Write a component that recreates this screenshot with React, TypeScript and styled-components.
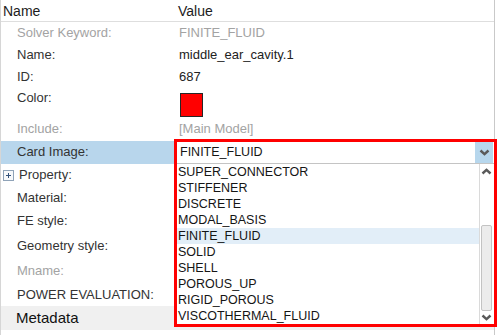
import React from "react";
import styled, { createGlobalStyle } from "styled-components";

const GlobalStyle = createGlobalStyle`
  html, body {
    margin: 0;
    padding: 0;
    background: #fff;
  }
  body {
    font-family: "Liberation Sans", Arial, sans-serif;
    color: #2b2b2b;
  }
`;

const Panel = styled.div`
  position: relative;
  width: 495px;
  height: 335px;
  box-sizing: border-box;
  border-left: 1px solid #d6d6d6;
  border-right: 1px solid #c9c9c9;
`;

const HeaderRow = styled.div`
  display: grid;
  grid-template-columns: 173px 1fr;
  height: 22px;
  box-sizing: border-box;
  border-bottom: 1px solid #dedede;
  font-size: 14px;
  line-height: 22px;
  color: #1c1c1c;
`;

const HeaderCell = styled.div<{ $pad: number }>`
  padding-left: ${(p) => p.$pad}px;
`;

const Row = styled.div<{ $h: number; $bg?: string }>`
  position: relative;
  display: grid;
  grid-template-columns: 173px 1fr;
  height: ${(p) => p.$h}px;
  box-sizing: border-box;
  padding-top: 3px;
  background: ${(p) => p.$bg || "transparent"};
  font-size: 13px;
  line-height: 16px;
`;

const Label = styled.div<{ $muted?: boolean; $tree?: boolean }>`
  display: flex;
  align-items: center;
  height: 16px;
  padding-left: ${(p) => (p.$tree ? 2 : 16)}px;
  color: ${(p) => (p.$muted ? "#a3a3a3" : "#333")};
`;

const Value = styled.div<{ $muted?: boolean }>`
  padding-left: 5px;
  color: ${(p) => (p.$muted ? "#a3a3a3" : "#222")};
`;

const Expander = styled.span`
  position: relative;
  width: 9px;
  height: 9px;
  margin-right: 5px;
  border: 1px solid #8fa3b8;
  background: #f7f9fb;

  &::before,
  &::after {
    content: "";
    position: absolute;
    background: #34527a;
  }
  &::before {
    left: 2px;
    top: 4px;
    width: 5px;
    height: 1px;
  }
  &::after {
    left: 4px;
    top: 2px;
    width: 1px;
    height: 5px;
  }
`;

const Swatch = styled.div`
  width: 23px;
  height: 24px;
  box-sizing: border-box;
  border: 1px solid #262626;
  background: #ff0000;
  margin-top: 3px;
  margin-left: 1px;
`;

const MetaRow = styled.div`
  height: 24px;
  padding-left: 15px;
  background: #f0f0f0;
  font-size: 15px;
  line-height: 24px;
  color: #111;
`;

const Combo = styled.div`
  position: absolute;
  left: 173px;
  top: -2px;
  width: 323px;
  height: 188px;
  box-sizing: border-box;
  border: 3px solid #ff0000;
  background: #fff;
  display: flex;
  flex-direction: column;
  font-size: 12.5px;
  color: #151515;
  z-index: 2;
`;

const ComboInput = styled.div`
  display: flex;
  height: 22px;
  box-sizing: border-box;
  border-bottom: 1px solid #c4c4c4;
`;

const ComboText = styled.div`
  flex: 1;
  padding-left: 3px;
  line-height: 21px;
`;

const DropButton = styled.div`
  width: 18px;
  margin-right: 1px;
  background: #b7d7ed;
  display: flex;
  align-items: center;
  justify-content: center;
`;

const ListArea = styled.div`
  flex: 1;
  display: flex;
  min-height: 0;
  overflow: hidden;
`;

const Items = styled.div`
  flex: 1;
`;

const Item = styled.div<{ $selected?: boolean }>`
  height: 16px;
  line-height: 16px;
  padding-left: 1px;
  background: ${(p) => (p.$selected ? "#e2eef8" : "transparent")};
`;

const Scrollbar = styled.div`
  width: 13px;
  margin-right: 1px;
  border-left: 1px solid #dadada;
  display: flex;
  flex-direction: column;
  align-items: center;
`;

const Arrow = styled.div`
  height: 14px;
  display: flex;
  align-items: center;
  justify-content: center;
`;

const Track = styled.div`
  flex: 1;
  width: 100%;
  display: flex;
  flex-direction: column;
  justify-content: flex-end;
`;

const Thumb = styled.div`
  height: 86px;
  box-sizing: border-box;
  border: 1px solid #c3c3c3;
  border-radius: 2px;
  background: #ececec;
  margin: 0 1px -1px;
`;

const Chevron = ({ up }: { up?: boolean }) => (
  <svg width="11" height="7" viewBox="0 0 11 7">
    <polyline
      points={up ? "1.5,5.5 5.5,1.8 9.5,5.5" : "1.5,1.5 5.5,5.2 9.5,1.5"}
      fill="none"
      stroke="#5a5a5a"
      strokeWidth="2.4"
    />
  </svg>
);

const options = [
  "SUPER_CONNECTOR",
  "STIFFENER",
  "DISCRETE",
  "MODAL_BASIS",
  "FINITE_FLUID",
  "SOLID",
  "SHELL",
  "POROUS_UP",
  "RIGID_POROUS",
  "VISCOTHERMAL_FLUID",
];

const rows = [
  { label: "Property:", h: 23, tree: true },
  { label: "Material:", h: 23 },
  { label: "FE style:", h: 25 },
  { label: "Geometry style:", h: 25 },
  { label: "Mname:", h: 24, muted: true },
  { label: "POWER EVALUATION:", h: 22 },
];

const App = () => {
  const selected = "FINITE_FLUID";

  return (
    <>
      <GlobalStyle />
      <Panel>
        <HeaderRow>
          <HeaderCell $pad={2}>Name</HeaderCell>
          <HeaderCell $pad={4}>Value</HeaderCell>
        </HeaderRow>
        <Row $h={22}>
          <Label $muted>Solver Keyword:</Label>
          <Value $muted>FINITE_FLUID</Value>
        </Row>
        <Row $h={22}>
          <Label>Name:</Label>
          <Value>middle_ear_cavity.1</Value>
        </Row>
        <Row $h={21}>
          <Label>ID:</Label>
          <Value>687</Value>
        </Row>
        <Row $h={31}>
          <Label>Color:</Label>
          <Value>
            <Swatch />
          </Value>
        </Row>
        <Row $h={23}>
          <Label $muted>Include:</Label>
          <Value $muted>[Main Model]</Value>
        </Row>
        <Row $h={23} $bg="#b8d6ec">
          <Label>Card Image:</Label>
          <Value />
          <Combo>
            <ComboInput>
              <ComboText>{selected}</ComboText>
              <DropButton>
                <Chevron />
              </DropButton>
            </ComboInput>
            <ListArea>
              <Items>
                {options.map((o) => (
                  <Item key={o} $selected={o === selected}>
                    {o}
                  </Item>
                ))}
              </Items>
              <Scrollbar>
                <Arrow>
                  <Chevron up />
                </Arrow>
                <Track>
                  <Thumb />
                </Track>
                <Arrow>
                  <Chevron />
                </Arrow>
              </Scrollbar>
            </ListArea>
          </Combo>
        </Row>
        {rows.map((r) => (
          <Row key={r.label} $h={r.h}>
            <Label $muted={r.muted} $tree={r.tree}>
              {r.tree && <Expander />}
              {r.label}
            </Label>
            <Value />
          </Row>
        ))}
        <MetaRow>Metadata</MetaRow>
      </Panel>
    </>
  );
};

export default App;
